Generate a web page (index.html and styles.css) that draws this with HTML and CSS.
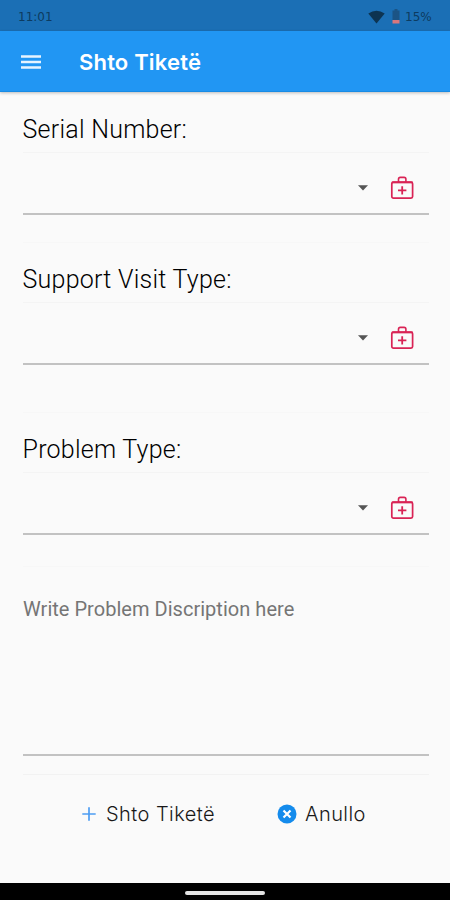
FILE: index.html
```html
<!DOCTYPE html>
<html lang="sq">
<head>
<meta charset="utf-8">
<meta name="viewport" content="width=device-width, initial-scale=1">
<title>Shto Tiketë</title>
<link rel="stylesheet" href="styles.css">
</head>
<body>
<svg class="defs" width="0" height="0" aria-hidden="true">
  <symbol id="kit" viewBox="0 0 24 24">
    <g fill="none" stroke="#d92355">
      <rect x="1.8" y="6.2" width="20.8" height="16" rx="1.6" stroke-width="1.7"/>
      <path d="M1.8 6.4h20.8" stroke-width="1.9"/>
      <path d="M8.500 6V3.200Q8.500 1.400 10.300 1.400h3.800q1.800 0 1.800 1.800V6" stroke-width="1.6"/>
      <path d="M12.200 10.200v8.400M8 14.400h8.400" stroke-width="1.8"/>
    </g>
  </symbol>
</svg>
<header class="status">
  <span class="time">11:01</span>
  <svg class="wifi" width="17" height="14" viewBox="0 0 17 14"><path d="M.3 3.500Q8.500-2 16.700 3.500L8.500 13.500Z" fill="#0d3452"/></svg>
  <svg class="battery" width="8" height="15" viewBox="0 0 8 15"><path d="M2.500 0h3v1.500H7.500V11H.5V1.500h2z" fill="#1b5485"/><path d="M.5 11h7v3.500h-7z" fill="#d9777d"/></svg>
  <span class="percent">15%</span>
</header>
<nav class="appbar">
  <svg class="menu" width="20" height="16" viewBox="0 0 20 16"><path d="M0 2.500h20M0 8h20M0 13.500h20" stroke="#e6f4ff" stroke-width="2.400"/></svg>
  <h1 class="title">Shto Tiketë</h1>
</nav>
<main class="form">
  <section class="field">
    <h2 class="label">Serial Number:</h2>
    <div class="select">
      <svg class="caret" width="10" height="6" viewBox="0 0 10 6"><path d="M0 .3h10L5 5.500z" fill="#555"/></svg>
      <svg class="kit" width="24" height="24"><use href="#kit"/></svg>
    </div>
    <div class="gap"></div>
  </section>
  <section class="field">
    <h2 class="label">Support Visit Type:</h2>
    <div class="select">
      <svg class="caret" width="10" height="6" viewBox="0 0 10 6"><path d="M0 .3h10L5 5.500z" fill="#555"/></svg>
      <svg class="kit" width="24" height="24"><use href="#kit"/></svg>
    </div>
    <div class="gap tall"></div>
  </section>
  <section class="field">
    <h2 class="label">Problem Type:</h2>
    <div class="select">
      <svg class="caret" width="10" height="6" viewBox="0 0 10 6"><path d="M0 .3h10L5 5.500z" fill="#555"/></svg>
      <svg class="kit" width="24" height="24"><use href="#kit"/></svg>
    </div>
    <div class="gap short"></div>
  </section>
  <div class="description">Write Problem Discription here</div>
  <div class="actions">
    <div class="action add">
      <svg width="14" height="14" viewBox="0 0 14 14"><path d="M7 .3v13.400M.3 7h13.400" stroke="#4d9df2" stroke-width="1.700"/></svg>
      <span>Shto Tiketë</span>
    </div>
    <div class="action cancel">
      <svg width="20" height="20" viewBox="0 0 20 20"><circle cx="10" cy="10" r="9.500" fill="#148bec"/><path d="M6.500 6.500l7 7M13.500 6.500l-7 7" stroke="#fff" stroke-width="2.200"/></svg>
      <span>Anullo</span>
    </div>
  </div>
</main>
<footer class="navbar"><div class="handle"></div></footer>
</body>
</html>
```
FILE: styles.css
```css
* { box-sizing: border-box; }
body {
  margin: 0;
  width: 450px;
  height: 900px;
  display: flex;
  flex-direction: column;
  overflow: hidden;
  background: #fafafa;
  font-family: Roboto, sans-serif;
  color: #181818;
}
svg { display: block; flex: none; }
.defs { position: absolute; }
.status {
  height: 31px;
  flex: none;
  display: flex;
  align-items: center;
  padding: 2px 17px 0 18px;
  background: #1b6fb5;
  color: #0d3b60;
  font: 12px "DejaVu Sans", sans-serif;
}
.time { margin-right: auto; }
.wifi { margin-right: 7px; }
.battery { margin-right: 5px; }
.percent { width: 28px; }
.appbar {
  height: 61px;
  flex: none;
  display: flex;
  align-items: center;
  padding: 2px 0 0 21px;
  background: #2196f3;
  border-bottom: 1px solid #188be5;
  box-shadow: 0 1px 3px rgba(0, 0, 0, .25);
}
.title {
  margin: 0 0 0 38px;
  font: 600 22px/30px Inter, sans-serif;
  letter-spacing: .18px;
  color: #fff;
  white-space: nowrap;
}
.form {
  flex: 1;
  padding: 1px 21px 0 23px;
}
.label {
  margin: 0 0 0 -.5px;
  height: 60px;
  padding-top: 22px;
  border-bottom: 1px solid #f4f4f4;
  font-size: 25px;
  line-height: 30px;
  font-weight: 300;
  letter-spacing: .25px;
  color: #000;
  white-space: nowrap;
}
.select {
  height: 62px;
  display: flex;
  justify-content: flex-end;
  align-items: center;
  gap: 22px;
  padding: 9px 15px 0 0;
  border-bottom: 2px solid #c2c2c2;
}
.gap { height: 28px; border-bottom: 1px solid #f7f7f7; }
.gap.tall { height: 48px; }
.gap.short { height: 32px; }
.description {
  height: 189px;
  padding-top: 30px;
  border-bottom: 2px solid #c2c2c2;
  font-size: 20px;
  line-height: 24px;
  letter-spacing: .03px;
  color: #757575;
}
.actions {
  margin-top: 18px;
  border-top: 1px solid #f2f2f2;
  display: flex;
  padding: 26px 0 0 59px;
}
.action {
  height: 26px;
  display: flex;
  align-items: center;
  font: 300 20px/26px Inter, sans-serif;
  letter-spacing: .45px;
  white-space: nowrap;
}
.add { width: 195px; gap: 10px; }
.cancel { gap: 8px; }
.navbar {
  height: 17px;
  flex: none;
  display: flex;
  justify-content: center;
  align-items: center;
  padding-top: 2px;
  background: #000;
}
.handle { width: 80px; height: 4px; border-radius: 2px; background: #e4e4e4; }
```
